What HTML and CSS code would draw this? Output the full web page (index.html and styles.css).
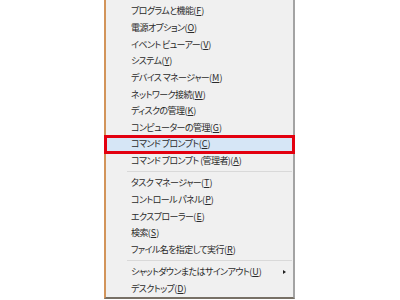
FILE: index.html
```html
<!DOCTYPE html>
<html lang="ja">
<head>
<meta charset="utf-8">
<link rel="stylesheet" href="styles.css">
</head>
<body>
<div class="menu">
  <div class="item"><span class="label">プログラムと機能<span class="key">(<u>F</u>)</span></span></div>
  <div class="item"><span class="label">電源オプション<span class="key">(<u>O</u>)</span></span></div>
  <div class="item"><span class="label">イベント ビューアー<span class="key">(<u>V</u>)</span></span></div>
  <div class="item"><span class="label">システム<span class="key">(<u>Y</u>)</span></span></div>
  <div class="item"><span class="label">デバイス マネージャー<span class="key">(<u>M</u>)</span></span></div>
  <div class="item"><span class="label">ネットワーク接続<span class="key">(<u>W</u>)</span></span></div>
  <div class="item"><span class="label">ディスクの管理<span class="key">(<u>K</u>)</span></span></div>
  <div class="item"><span class="label">コンピューターの管理<span class="key">(<u>G</u>)</span></span></div>
  <div class="item active"><span class="label">コマンド プロンプト<span class="key">(<u>C</u>)</span></span></div>
  <div class="item"><span class="label">コマンド プロンプト (管理者)<span class="key">(<u>A</u>)</span></span></div>
  <div class="sep"></div>
  <div class="item"><span class="label">タスク マネージャー<span class="key">(<u>T</u>)</span></span></div>
  <div class="item"><span class="label">コントロール パネル<span class="key">(<u>P</u>)</span></span></div>
  <div class="item"><span class="label">エクスプローラー<span class="key">(<u>E</u>)</span></span></div>
  <div class="item"><span class="label">検索<span class="key">(<u>S</u>)</span></span></div>
  <div class="item"><span class="label">ファイル名を指定して実行<span class="key">(<u>R</u>)</span></span></div>
  <div class="sep"></div>
  <div class="item"><span class="label">シャットダウンまたはサインアウト<span class="key">(<u>U</u>)</span></span><span class="arrow"></span></div>
  <div class="item"><span class="label">デスクトップ<span class="key">(<u>D</u>)</span></span></div>
</div>
</body>
</html>
```
FILE: styles.css
```css
html, body {
  margin: 0;
  padding: 0;
  background: #ffffff;
}
body {
  width: 400px;
  height: 300px;
  overflow: hidden;
}
.menu {
  margin-left: 104px;
  width: 187px;
  padding-top: 2.4px;
  background: #f0f0f0;
  border-left: 2px solid #d2945a;
  border-right: 2px solid #a3a3a3;
  border-bottom: 2px solid #777066;
  font-family: "Noto Sans CJK JP", "Noto Sans", sans-serif;
  font-feature-settings: "palt";
  font-size: 9px;
  letter-spacing: -0.6px;
  color: #2a2a2a;
}
.item {
  height: 16.67px;
  display: flex;
  align-items: center;
  padding-left: 25px;
  padding-right: 7px;
  white-space: nowrap;
}
.key {
  letter-spacing: 0;
}
.key u {
  text-underline-offset: 1px;
}
.item.active {
  position: relative;
  background: #d6e6f6;
}
.item.active::after {
  content: "";
  position: absolute;
  left: -2px;
  right: -2px;
  top: -1px;
  bottom: -1.5px;
  border: 3px solid #e3000f;
}
.sep {
  height: 5.6px;
  display: flex;
  align-items: center;
  margin-left: 21px;
  margin-right: 1px;
}
.sep::before {
  content: "";
  display: block;
  flex: 1;
  height: 1px;
  background: #d9d9d9;
}
.arrow {
  margin-left: auto;
  width: 0;
  height: 0;
  border-top: 2.5px solid transparent;
  border-bottom: 2.5px solid transparent;
  border-left: 3px solid #202020;
}
```
